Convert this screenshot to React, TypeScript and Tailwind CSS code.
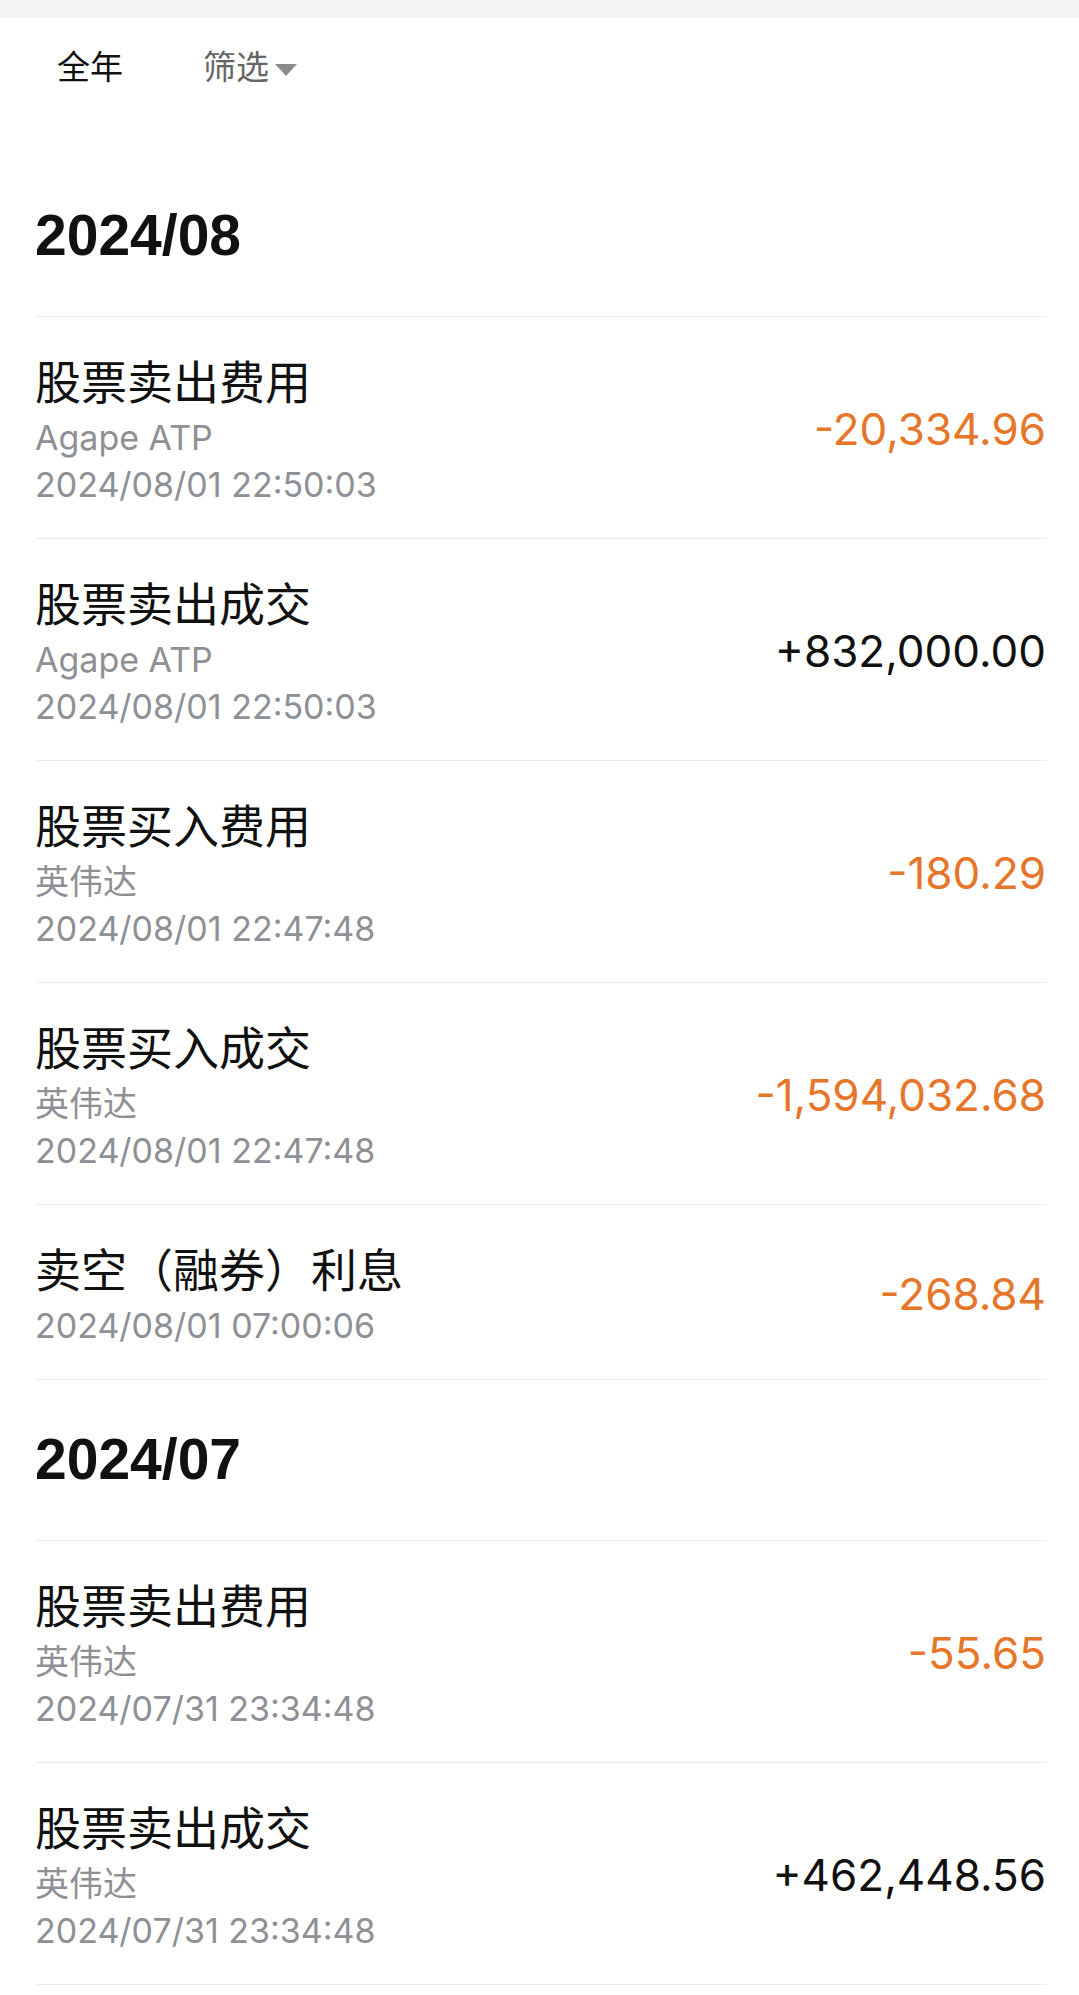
const FONT = "font-['Inter','Noto_Sans_CJK_SC',sans-serif]";

type Row = {
  title: string;
  sub?: string;
  time: string;
  amount: string;
};

const sections: { month: string; rows: Row[] }[] = [
  {
    month: "2024/08",
    rows: [
      { title: "股票卖出费用", sub: "Agape ATP", time: "2024/08/01 22:50:03", amount: "-20,334.96" },
      { title: "股票卖出成交", sub: "Agape ATP", time: "2024/08/01 22:50:03", amount: "+832,000.00" },
      { title: "股票买入费用", sub: "英伟达", time: "2024/08/01 22:47:48", amount: "-180.29" },
      { title: "股票买入成交", sub: "英伟达", time: "2024/08/01 22:47:48", amount: "-1,594,032.68" },
      { title: "卖空（融券）利息", time: "2024/08/01 07:00:06", amount: "-268.84" },
    ],
  },
  {
    month: "2024/07",
    rows: [
      { title: "股票卖出费用", sub: "英伟达", time: "2024/07/31 23:34:48", amount: "-55.65" },
      { title: "股票卖出成交", sub: "英伟达", time: "2024/07/31 23:34:48", amount: "+462,448.56" },
    ],
  },
];

function RecordRow({ row }: { row: Row }) {
  const negative = row.amount.startsWith("-");
  return (
    <div className="flex items-center justify-between border-b border-[#ececec] pt-[33px] pb-[30px]">
      <div className="flex flex-col">
        <div className="text-[46px] leading-[64px] text-[#111]">{row.title}</div>
        {row.sub && <div className="text-[34px] leading-[47px] text-[#8e9095]">{row.sub}</div>}
        <div className="text-[34px] leading-[47px] text-[#8e9095]">{row.time}</div>
      </div>
      <div className={`text-[44px] leading-none ${negative ? "text-[#e5762a]" : "text-[#111]"}`}>
        {row.amount}
      </div>
    </div>
  );
}

export default function App() {
  return (
    <div className={`min-h-screen w-full bg-white ${FONT}`}>
      <div className="h-[18px] bg-[#f4f4f4]" />

      <div className="flex h-[100px] items-center pl-[57px]">
        <span className="text-[33px] text-[#111]">全年</span>
        <span className="ml-[80px] flex items-center text-[33px] text-[#666]">
          筛选
          <svg width="22" height="12" viewBox="0 0 22 12" className="ml-[6px] mt-[4px]">
            <path d="M0 0 H22 L11 12 Z" fill="#8a8a8a" />
          </svg>
        </span>
      </div>

      <div className="mt-[38px] pl-[35px] pr-[33px]">
        {sections.map((s) => (
          <div key={s.month}>
            <div className="flex h-[161px] items-center border-b border-[#ececec] font-['Liberation_Sans',sans-serif] text-[57px] font-bold text-[#111]">
              {s.month}
            </div>
            {s.rows.map((r, i) => (
              <RecordRow key={i} row={r} />
            ))}
          </div>
        ))}
      </div>
    </div>
  );
}
